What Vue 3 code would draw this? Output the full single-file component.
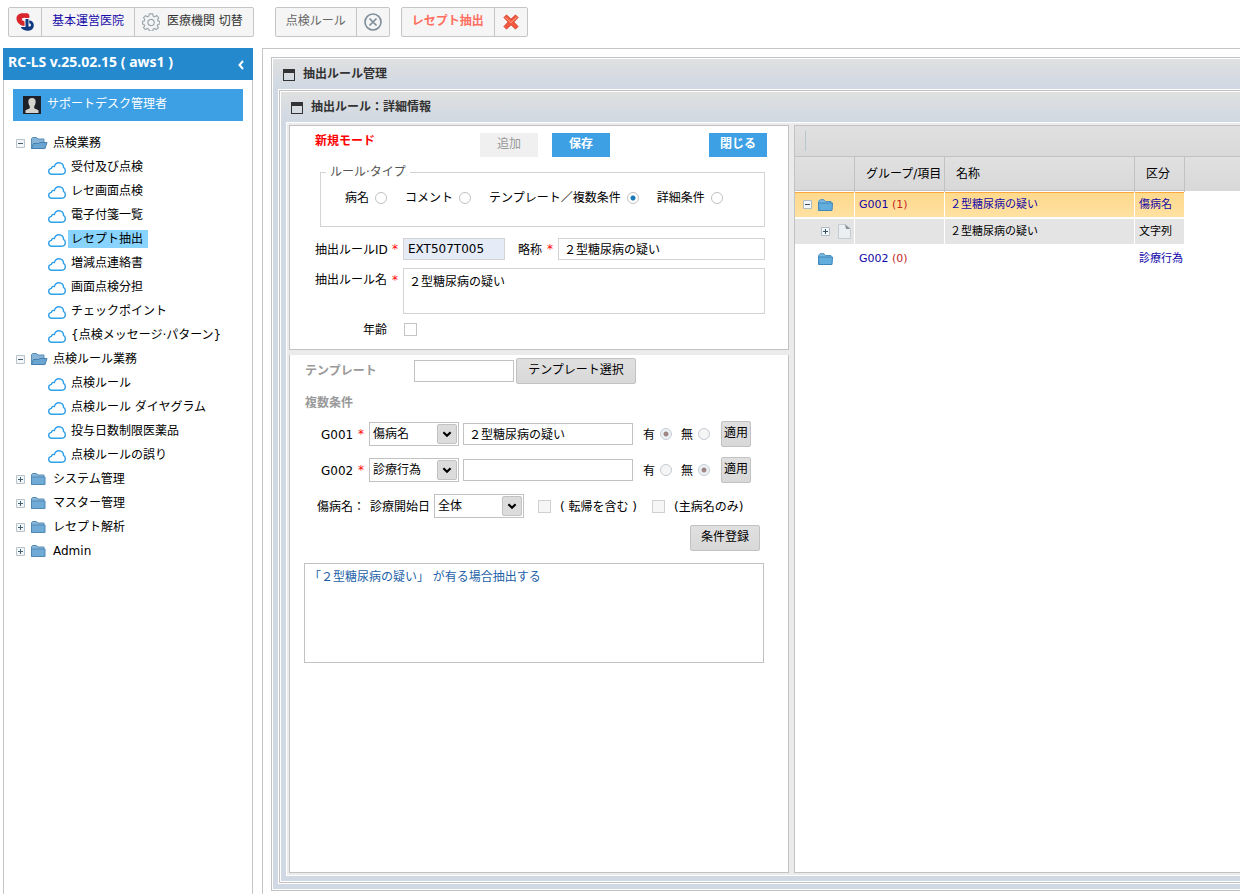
<template>
  <div class="page">
    <header class="topbar">
      <div class="btn-group clinic">
        <button type="button" class="seg logo-seg" aria-label="RC-LS">
          <svg width="18" height="18" viewBox="0 0 18 18">
            <path d="M6.500 .3h4.500c2 .4 3 2.200 2.200 4.700H9.500C7 4.500 5.500 5.500 6 7c.5 1 2 .8 2.500 1.500V13C4 12.500 .5 9.500 .5 5.500.5 2.500 3 .3 6.500 .3z" fill="#d9252c" />
            <path d="M9.500 6h3v7.500c1.500.3 2.500-.2 2.500-1.300s-.8-1.700-1.800-1.900V7.500c2.500 0 4.600 2 4.600 4.800 0 3.200-2.200 5.400-5.300 5.400C9 17.700 5.500 16.500 5 14h4.500z" fill="#123a82" />
          </svg>
        </button>
        <button type="button" class="seg clinic-name">基本運営医院</button>
        <button type="button" class="seg switch">
          <svg width="18" height="18" viewBox="0 0 18 18" fill="none" stroke="#9ba7af" stroke-width="1.200">
            <path d="M7.300 0.800h3.400l.5 2.200 1.500.7 2-1.200 2 2.200-1.200 2 .5 1.200 1.800.4v2.700l-1.900.5-.6 1.300 1.100 1.900-1.900 1.900-2-1.100-1.300.6-.5 1.900H7.300l-.5-1.900-1.400-.6-2 1.100-1.900-1.900 1.100-2-.6-1.300-1.500-.4V8.300L2.200 8l.6-1.300-1.200-2 1.900-2 2 1.100 1.300-.6z" />
            <circle cx="9" cy="9.500" r="3.200" />
          </svg>
          <span>医療機関 切替</span>
        </button>
      </div>
      <div class="btn-group">
        <button type="button" class="seg tab">点検ルール</button>
        <button type="button" class="seg tab-close" aria-label="点検ルールを閉じる">
          <svg width="18" height="18" viewBox="0 0 18 18" fill="none" stroke="#7e8d99">
            <circle cx="9" cy="9" r="8" stroke-width="1.600" />
            <path d="M5.500 5.500l7 7M12.500 5.500l-7 7" stroke-width="1.700" />
          </svg>
        </button>
      </div>
      <div class="btn-group">
        <button type="button" class="seg tab active">レセプト抽出</button>
        <button type="button" class="seg tab-close" aria-label="レセプト抽出を閉じる">
          <svg width="16" height="16" viewBox="0 0 16 16">
            <path d="M1 3.500L3.500 1 8 5.300 12.500 1 15 3.500 10.700 8 15 12.500 12.500 15 8 10.700 3.500 15 1 12.500 5.300 8z" fill="#f8583f" stroke="#cf3c22" stroke-linejoin="round" />
            <path d="M2.500 3.500L8 8.500 13.500 3.500" fill="none" stroke="#ffac8c" />
          </svg>
        </button>
      </div>
    </header>

    <div class="columns">
      <aside class="sidebar">
        <div class="side-title">
          <span>RC-LS v.25.02.15 ( aws1 )</span>
          <button type="button" class="collapse" aria-label="メニューを閉じる">
            <svg width="6" height="10" viewBox="0 0 6 10" fill="none" stroke="#fff" stroke-width="2">
              <path d="M5 1L1.500 5 5 9" />
            </svg>
          </button>
        </div>
        <div class="user">
          <svg width="18" height="18" viewBox="0 0 18 18">
            <path d="M0 0h18v18H0z" fill="#1d1f29" />
            <path d="M9 2C6.200 2 5 4 5.400 6.500c.2 2 .8 3 1.400 3.700v2L2.500 14.200V17h13v-2.800l-4.300-2v-2c.7-.8 1.200-2 1.400-3.700C13 4 11.800 2 9 2z" fill="#d5d3ce" />
          </svg>
          <span>サポートデスク管理者</span>
        </div>
        <nav>
          <ul class="tree">
            <li v-for="node in menu" :key="node.label">
              <div class="node">
                <button type="button" class="toggle" :aria-label="node.label" @click="node.open = !node.open">
                  <svg width="9" height="9" viewBox="0 0 9 9">
                    <path d="M.5.500h8v8h-8z" fill="#f4f7f9" stroke="#b9c3c9" />
                    <path :d="node.open ? 'M2 4.500h5' : 'M2 4.500h5M4.500 2v5'" stroke="#44606f" />
                  </svg>
                </button>
                <svg class="folder" width="17" height="14" viewBox="0 0 17 14">
                  <path d="M.5 12.500V2.500L1.500 1.500h4L7 3h6v9.500z" fill="#87b5d8" stroke="#5a8db5" />
                  <path v-if="node.open" d="M.5 12.500L2.500 7.500h5L9 6.500h7L14 12.500z" fill="#6ba6d3" stroke="#4581b0" />
                  <path v-else d="M.5 5h13.500v7.500H.5z" fill="#6fabd6" stroke="#5088b4" />
                </svg>
                <a href="#" @click.prevent>{{ node.label }}</a>
              </div>
              <ul v-if="node.open">
                <li v-for="item in node.children" :key="item" class="leaf">
                  <svg class="cloud" width="18" height="13" viewBox="0 0 18 13" fill="none" stroke="#2fa0ea" stroke-width="1.400">
                    <path d="M3.800 12.200C1.800 12.200.7 11 .7 9.300c0-1.700 1.200-2.700 2.700-2.900.2-1.600 1.700-2.300 3-1.900C7 2.200 8.700.8 11 .8c2.800 0 4.700 2 4.500 4.500 1.200.7 1.800 1.900 1.800 3.300 0 2.200-1.500 3.600-3.500 3.600z" />
                  </svg>
                  <a href="#" :class="{ selected: item === current }" @click.prevent="current = item">{{ item }}</a>
                </li>
              </ul>
            </li>
          </ul>
        </nav>
      </aside>

      <main class="main">
        <section class="frame outer">
          <h1 class="frame-title"><span class="win-icon"></span>抽出ルール管理</h1>
          <section class="frame inner">
            <h2 class="frame-title"><span class="win-icon"></span>抽出ルール：詳細情報</h2>
            <div class="body">
              <form class="left" @submit.prevent>
                <div class="panel top-panel">
                  <div class="actions">
                    <strong class="mode">新規モード</strong>
                    <button type="button" class="flat" disabled>追加</button>
                    <button type="button" class="flat">保存</button>
                    <button type="button" class="flat close">閉じる</button>
                  </div>
                  <fieldset class="types">
                    <legend>ルール·タイプ</legend>
                    <label v-for="t in types" :key="t">
                      {{ t }}<input v-model="ruleType" type="radio" name="ruleType" :value="t" />
                    </label>
                  </fieldset>
                  <div class="field">
                    <label class="name" for="ruleId">抽出ルールID</label><span class="req">*</span>
                    <input id="ruleId" v-model="ruleId" class="text rule-id" readonly />
                    <label class="short" for="shortName">略称</label><span class="req">*</span>
                    <input id="shortName" v-model="shortName" class="text grow" />
                  </div>
                  <div class="field tall">
                    <label class="name" for="ruleName">抽出ルール名</label><span class="req">*</span>
                    <textarea id="ruleName" v-model="ruleName" class="text grow"></textarea>
                  </div>
                  <div class="field">
                    <label class="name" for="age">年齢</label><span class="req"></span>
                    <input id="age" class="age" type="checkbox" />
                  </div>
                </div>

                <div class="panel bottom-panel">
                  <div class="line">
                    <label class="section" for="template">テンプレート</label>
                    <input id="template" class="text template" />
                    <button type="button" class="gray pick">テンプレート選択</button>
                  </div>
                  <div class="section multi">複数条件</div>
                  <div v-for="c in conditions" :key="c.id" class="line cond">
                    <label class="cond-id" :for="c.id">{{ c.id }}</label><span class="req">*</span>
                    <span class="select">
                      <select :id="c.id" v-model="c.kind">
                        <option>傷病名</option>
                        <option>診療行為</option>
                      </select>
                      <svg width="20" height="20" viewBox="0 0 20 20"><path d="M6 8l4 4 4-4" fill="none" stroke="#000" stroke-width="2.400" /></svg>
                    </span>
                    <input v-model="c.value" class="text cond-value" :aria-label="c.id" />
                    <label class="presence"><span>有</span><input v-model="c.has" type="radio" :name="'has-' + c.id" value="有" disabled /></label>
                    <label class="presence"><span>無</span><input v-model="c.has" type="radio" :name="'has-' + c.id" value="無" disabled /></label>
                    <button type="button" class="gray apply">適用</button>
                  </div>
                  <div class="line cond">
                    <span class="disease">傷病名：</span>
                    <label class="start" for="startDate">診療開始日</label>
                    <span class="select">
                      <select id="startDate" v-model="period">
                        <option>全体</option>
                      </select>
                      <svg width="20" height="20" viewBox="0 0 20 20"><path d="M6 8l4 4 4-4" fill="none" stroke="#000" stroke-width="2.400" /></svg>
                    </span>
                    <div class="checks">
                      <label class="check"><input type="checkbox" disabled /><span>( 転帰を含む )</span></label>
                      <label class="check"><input type="checkbox" disabled /><span>(主病名のみ)</span></label>
                    </div>
                  </div>
                  <button type="button" class="gray register">条件登録</button>
                  <textarea v-model="summary" class="text summary" aria-label="条件" readonly></textarea>
                </div>
              </form>

              <div class="panel grid-panel">
                <div class="toolbar"><span class="sep"></span></div>
                <div class="grid-head-fill">
                  <table class="grid">
                    <thead>
                      <tr>
                        <th class="c-tree"></th>
                        <th class="c-group">グループ/項目</th>
                        <th class="c-name">名称</th>
                        <th class="c-kind">区分</th>
                      </tr>
                    </thead>
                    <tbody>
                      <tr v-for="(row, i) in rows" :key="i" :class="row.type">
                        <td>
                          <span class="tree-cell" :class="{ nested: row.type === 'item' }">
                            <span class="slot">
                              <svg v-if="row.mark" width="9" height="9" viewBox="0 0 9 9">
                                <path d="M.5.500h8v8h-8z" fill="#f4f7f9" stroke="#b0bcc4" />
                                <path :d="row.mark === '-' ? 'M2 4.500h5' : 'M2 4.500h5M4.500 2v5'" stroke="#334f60" />
                              </svg>
                            </span>
                            <svg v-if="row.type === 'item'" width="13" height="15" viewBox="0 0 13 15">
                              <path d="M.5.500h7L12.500 5v9.500H.5z" fill="#eceff2" stroke="#c5cbd0" />
                              <path d="M7 .500L8 5h4.500z" fill="#879198" />
                            </svg>
                            <svg v-else width="15" height="12" viewBox="0 0 15 12">
                              <path d="M.5 11.500v-9L2 .700h4L7.500 2.500h5.500v9z" fill="#7cb9e0" stroke="#4e93c2" />
                              <path d="M.5 4h14l-.5 7.500H1z" fill="#63aedd" stroke="#3e86b8" />
                            </svg>
                          </span>
                        </td>
                        <td><template v-if="row.group">{{ row.group }} <span class="count">({{ row.count }})</span></template></td>
                        <td>{{ row.name }}</td>
                        <td>{{ row.kind }}</td>
                      </tr>
                    </tbody>
                  </table>
                </div>
              </div>
            </div>
          </section>
        </section>
      </main>
    </div>
  </div>
</template>

<script setup>
import { ref, reactive } from 'vue'

const current = ref('レセプト抽出')

const menu = reactive([
  {
    label: '点検業務',
    open: true,
    children: [
      '受付及び点検',
      'レセ画面点検',
      '電子付箋一覧',
      'レセプト抽出',
      '増減点連絡書',
      '画面点検分担',
      'チェックポイント',
      '{点検メッセージ·パターン}'
    ]
  },
  {
    label: '点検ルール業務',
    open: true,
    children: ['点検ルール', '点検ルール ダイヤグラム', '投与日数制限医薬品', '点検ルールの誤り']
  },
  { label: 'システム管理', open: false, children: [] },
  { label: 'マスター管理', open: false, children: [] },
  { label: 'レセプト解析', open: false, children: [] },
  { label: 'Admin', open: false, children: [] }
])

const types = ['病名', 'コメント', 'テンプレート／複数条件', '詳細条件']
const ruleType = ref('テンプレート／複数条件')
const ruleId = ref('EXT507T005')
const shortName = ref('２型糖尿病の疑い')
const ruleName = ref('２型糖尿病の疑い')
const period = ref('全体')
const summary = ref('「２型糖尿病の疑い」 が有る場合抽出する')

const conditions = reactive([
  { id: 'G001', kind: '傷病名', value: '２型糖尿病の疑い', has: '有' },
  { id: 'G002', kind: '診療行為', value: '', has: '無' }
])

const rows = [
  { type: 'current', mark: '-', group: 'G001', count: 1, name: '２型糖尿病の疑い', kind: '傷病名' },
  { type: 'item', mark: '+', group: '', name: '２型糖尿病の疑い', kind: '文字列' },
  { type: 'group', mark: '', group: 'G002', count: 0, name: '', kind: '診療行為' }
]
</script>

<style>
body {
  margin: 0;
  background: #fff;
  overflow: hidden;
}
</style>

<style scoped>
.page {
  display: flex;
  flex-direction: column;
  height: 100vh;
  font-family: "DejaVu Sans", "Noto Sans CJK JP", sans-serif;
  font-size: 12px;
  line-height: 18px;
  color: #000;
}

.page *,
.page *::before {
  box-sizing: border-box;
}

button,
input,
select,
textarea {
  font: inherit;
  color: inherit;
  margin: 0;
  padding: 0;
}

svg {
  display: block;
  flex: none;
}

a {
  color: inherit;
  text-decoration: none;
}

ul {
  list-style: none;
  margin: 0;
  padding: 0;
}

/* top bar */
.topbar {
  display: flex;
  flex: none;
  height: 48px;
  padding: 7px 8px 0;
}

.btn-group {
  display: flex;
  height: 30px;
  margin-right: 11px;
  border: 1px solid #c5c5c5;
  border-radius: 2px;
  background: #f5f5f5;
}

.btn-group.clinic {
  margin-right: 21px;
}

.seg {
  display: flex;
  align-items: center;
  border: 0;
  background: none;
  padding: 0 9px 2px;
  white-space: nowrap;
}

.seg + .seg {
  border-left: 1px solid #c5c5c5;
}

.logo-seg {
  padding: 0 7px;
}

.clinic-name {
  color: #1a0dab;
  padding: 0 10px 2px;
}

.switch {
  gap: 7px;
  padding: 0 10px 2px 7px;
  color: #333;
}

.switch svg {
  margin-top: 2px;
}

.tab {
  color: #666;
  padding: 0 10px 2px;
}

.tab.active {
  color: #ff6f61;
  font-weight: bold;
}

.tab-close {
  width: 33px;
  justify-content: center;
  padding: 0;
}

.columns {
  display: flex;
  flex: 1;
  min-height: 0;
}

/* sidebar */
.sidebar {
  flex: none;
  width: 250px;
  margin: 0 9px 0 3px;
  border: 1px solid #c5c5c5;
  border-width: 0 1px;
}

.side-title {
  display: flex;
  justify-content: space-between;
  align-items: center;
  height: 32px;
  margin: 0 -1px 9px;
  padding: 0 9px 4px 5px;
  background: #2589ce;
  color: #fff;
  font-family: "Noto Sans", "Noto Sans CJK JP", sans-serif;
  font-size: 14px;
  font-weight: bold;
}

.collapse {
  border: 0;
  background: none;
  padding-top: 6px;
}

.user {
  display: flex;
  align-items: center;
  gap: 6px;
  height: 32px;
  margin: 0 9px 10px;
  padding: 0 10px;
  background: #3ea0e4;
  color: #fff;
}

.user span {
  padding-bottom: 3px;
}

.node,
.leaf {
  display: flex;
  align-items: center;
  height: 24px;
  padding-left: 12px;
}

.toggle {
  border: 0;
  background: none;
  margin-right: 6px;
}

.folder {
  margin-right: 5px;
}

.leaf {
  padding-left: 44px;
}

.cloud {
  margin: 3px 2px 0 0;
}

.leaf a {
  padding: 0 5px 0 3px;
}

.leaf a.selected {
  background: #89d4ff;
}

/* frames */
.main {
  flex: 1;
  min-width: 0;
  display: flex;
  padding: 8px 0 3px 8px;
  border: 1px solid #c5c5c5;
  border-width: 1px 0 0 1px;
}

.frame {
  flex: 1;
  min-width: 0;
  display: flex;
  flex-direction: column;
  padding: 1px 0 6px 6px;
  border: 1px solid #c2c2c2;
  border-right: 0;
  background: linear-gradient(#e0e0e0, #cfd8e3 32px, #cfd8e3);
  box-shadow: inset 1px 1px #fff, inset 0 -1px #fff;
}

.frame.inner {
  margin: 1px 0 1px 1px;
  outline: 1px solid #fff;
}

.frame-title {
  display: flex;
  align-items: center;
  gap: 8px;
  height: 30px;
  margin: 0;
  padding-left: 5px;
  font-size: 12px;
  font-weight: bold;
  color: #333;
}

.win-icon {
  width: 12px;
  height: 12px;
  margin-top: 2px;
  border: 1px solid #333;
  border-top-width: 4px;
}

.body {
  flex: 1;
  min-height: 0;
  display: flex;
  gap: 5px;
  padding: 2px 0 2px 2px;
  border: 1px solid #fff;
  border-right: 0;
  background: #ebebeb;
}

.left {
  flex: none;
  width: 500px;
  display: flex;
  flex-direction: column;
  gap: 5px;
}

.panel {
  background: #fff;
  border: 1px solid #c2c2c2;
}

/* upper form */
.top-panel {
  padding: 7px 23px 1px 25px;
}

.actions {
  display: flex;
  height: 24px;
  margin-right: -2px;
}

.mode {
  width: 165px;
  line-height: 16px;
  color: #f00;
}

.flat {
  width: 58px;
  height: 24px;
  margin-right: 14px;
  padding-bottom: 2px;
  border: 0;
  background: #3ea0e4;
  color: #fff;
  font-weight: bold;
}

.flat:disabled {
  background: #f0f0f0;
  color: #999;
  font-weight: normal;
}

.flat.close {
  margin: 0 0 0 auto;
}

.types {
  display: flex;
  gap: 18px;
  height: 64px;
  margin: 6px 0 11px 5px;
  padding: 8px 0 0 24px;
  border: 1px solid #d3d3d3;
  min-width: 0;
}

.types legend {
  margin-left: -19px;
  padding: 0 4px;
  color: #555;
}

.types label {
  display: flex;
  align-items: center;
  gap: 6px;
  height: 18px;
}

input[type="radio"] {
  appearance: none;
  flex: none;
  width: 12px;
  height: 12px;
  border: 1px solid #c2c2c2;
  border-radius: 50%;
  background: #fff;
}

input[type="radio"]:checked {
  background: radial-gradient(circle, #1779ba 2px, #fff 3px);
}

input[type="radio"]:disabled {
  border-color: #c3cbd3;
  background: #f5f5f5;
}

input[type="radio"]:disabled:checked {
  background: radial-gradient(circle, #a08585 2px, #edf2f6 3px);
}

input[type="checkbox"] {
  appearance: none;
  flex: none;
  width: 13px;
  height: 13px;
  border: 1px solid #c5c5c5;
  background: #fff;
}

input[type="checkbox"]:disabled {
  border-color: #d0d0d0;
  background: #f6f6f6;
}

.field {
  display: flex;
  align-items: center;
  min-height: 22px;
  margin-bottom: 8px;
}

.field.tall {
  align-items: flex-start;
  margin-bottom: 4px;
}

.name,
.short {
  padding-top: 2px;
}

.name {
  width: 72px;
  text-align: right;
  white-space: nowrap;
}

.tall .name,
.tall .req {
  padding-top: 3px;
}

.req {
  width: 16px;
  flex: none;
  text-align: center;
  color: #f00;
}

.short {
  margin-left: 13px;
}

.age {
  margin-left: 1px;
}

.text {
  height: 22px;
  padding: 0 5px 1px;
  border: 1px solid #d3d3d3;
  border-radius: 0;
  background: #fff;
  min-width: 0;
  outline: 0;
  resize: none;
  display: block;
}

.rule-id {
  width: 102px;
  padding: 0 4px 1px;
  background: #e5ecf8;
}

.grow {
  flex: 1;
}

textarea.text.grow {
  height: 46px;
  padding-top: 4px;
}

/* lower form */
.bottom-panel {
  flex: 1;
  border-top: 0;
  padding: 3px 24px 0 14px;
}

.line {
  display: flex;
  align-items: center;
  height: 26px;
}

.bottom-panel .text {
  border-color: #c2c2c2;
}

.section {
  width: 110px;
  padding-left: 1px;
  color: #999;
  font-weight: bold;
}

.multi {
  margin: 10px 0 9px;
}

.template {
  width: 100px;
  margin-right: 2px;
}

.gray {
  height: 26px;
  padding-bottom: 2px;
  border: 1px solid #c2c2c2;
  border-radius: 2px;
  background: linear-gradient(#e0e0e0, #d8d8d8);
  white-space: nowrap;
}

.pick {
  width: 120px;
}

.cond {
  margin-bottom: 10px;
}

.cond-id,
.disease,
.start,
.presence span {
  padding-top: 2px;
}

.cond-id {
  width: 49px;
  padding-left: 17px;
}

.select {
  position: relative;
  flex: none;
  width: 90px;
  margin-right: 4px;
}

.select select {
  appearance: none;
  display: block;
  width: 100%;
  height: 24px;
  padding: 0 22px 1px 3px;
  border: 1px solid #c2c2c2;
  border-radius: 0;
  background: #fff;
}

.select svg {
  position: absolute;
  top: 2px;
  right: 2px;
  border: 1px solid #c2c2c2;
  border-radius: 2px;
  background: #dcdcdc;
  pointer-events: none;
}

.cond-value {
  width: 170px;
  margin-right: 10px;
}

.presence {
  display: flex;
  align-items: center;
  gap: 5px;
  margin-right: 9px;
}

.apply {
  width: 30px;
  margin-left: 2px;
}

.disease {
  width: 66px;
  padding-left: 13px;
  white-space: nowrap;
}

.start {
  width: 64px;
}

.checks {
  display: flex;
  gap: 15px;
  margin-left: 10px;
}

.check {
  display: flex;
  align-items: center;
  gap: 9px;
  white-space: nowrap;
}

.check span {
  padding-top: 2px;
}

.register {
  display: block;
  width: 70px;
  margin: -4px 4px 12px auto;
}

.summary {
  width: 100%;
  height: 100px;
  padding: 4px;
  color: #1d5fa8;
}

/* grid */
.grid-panel {
  flex: 1;
  min-width: 0;
  border-right: 0;
}

.toolbar {
  height: 31px;
  padding: 5px 10px;
  border-bottom: 1px solid #c2c2c2;
  background: linear-gradient(#e0e0e0, #d9d9d9);
}

.sep {
  display: block;
  width: 1px;
  height: 20px;
  background: #b5c6cc;
}

.grid-head-fill {
  background: linear-gradient(#e0e0e0, #d8d8d8) no-repeat 0 0 / 100% 34px;
}

.grid {
  width: 390px;
  table-layout: fixed;
  border-spacing: 0;
  font-size: 11px;
}

.grid th {
  height: 35px;
  padding: 0 0 2px 11px;
  border-right: 1px solid #c2c2c2;
  background: linear-gradient(#c2c2c2, #c2c2c2) no-repeat 0 33px / 100% 1px;
  font-size: 12px;
  font-weight: normal;
  text-align: left;
  white-space: nowrap;
}

.c-tree {
  width: 60px;
}

.c-group {
  width: 90px;
}

.c-name {
  width: 190px;
}

.c-kind {
  width: 50px;
}

.grid td {
  height: 27px;
  padding: 0 0 0 4px;
  border: 1px solid #fff;
  border-width: 0 1px 2px 0;
  white-space: nowrap;
}

.grid td:nth-child(3) {
  padding-left: 5px;
}

.current,
.group {
  color: #1207a8;
}

.current td {
  background: linear-gradient(#fda83c, #fda83c) no-repeat 0 0 / 100% 1px, linear-gradient(#ffd98c, #ffe1a2);
}

.item td {
  background: #e4e4e4;
}

.count {
  color: #c2271d;
}

.tree-cell {
  display: flex;
  align-items: center;
  padding-left: 4px;
}

.tree-cell.nested {
  padding-left: 22px;
}

.slot {
  width: 15px;
}

.nested .slot {
  width: 17px;
}
</style>
